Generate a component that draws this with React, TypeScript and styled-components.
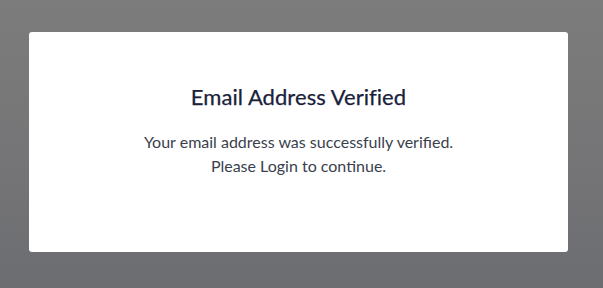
import React from "react";
import styled, { createGlobalStyle } from "styled-components";

const GlobalStyle = createGlobalStyle`
    html, body {
        margin: 0;
        padding: 0;
    }
    body {
        font-family: Lato, "Open Sans", sans-serif;
    }
`;

const Overlay = styled.div`
    box-sizing: border-box;
    width: 603px;
    height: 288px;
    padding: 32px 35px 36px 29px;
    background: linear-gradient(180deg, #7c7c7c 0%, #757577 55%, #6c6d71 100%);
    overflow: hidden;
`;

const Modal = styled.div`
    box-sizing: border-box;
    height: 100%;
    background: #ffffff;
    border-radius: 3px;
    display: flex;
    flex-direction: column;
    align-items: center;
    padding-top: 51px;
`;

const Title = styled.h2`
    margin: 0 0 19px;
    font-family: Lato, sans-serif;
    font-size: 22px;
    font-weight: 400;
    line-height: 28px;
    letter-spacing: 0.05px;
    color: #18223a;
    -webkit-text-stroke: 0.25px #18223a;
`;

const Message = styled.p`
    margin: 0;
    font-family: Lato, sans-serif;
    font-size: 16px;
    line-height: 23.5px;
    color: #3a3f4e;
    text-align: center;
`;

const App: React.FC = () => {
    return (
        <>
            <GlobalStyle />
            <Overlay>
                <Modal>
                    <Title>Email Address Verified</Title>
                    <Message>
                        Your email address was successfully verified.
                        <br />
                        Please Login to continue.
                    </Message>
                </Modal>
            </Overlay>
        </>
    );
};

export default App;
